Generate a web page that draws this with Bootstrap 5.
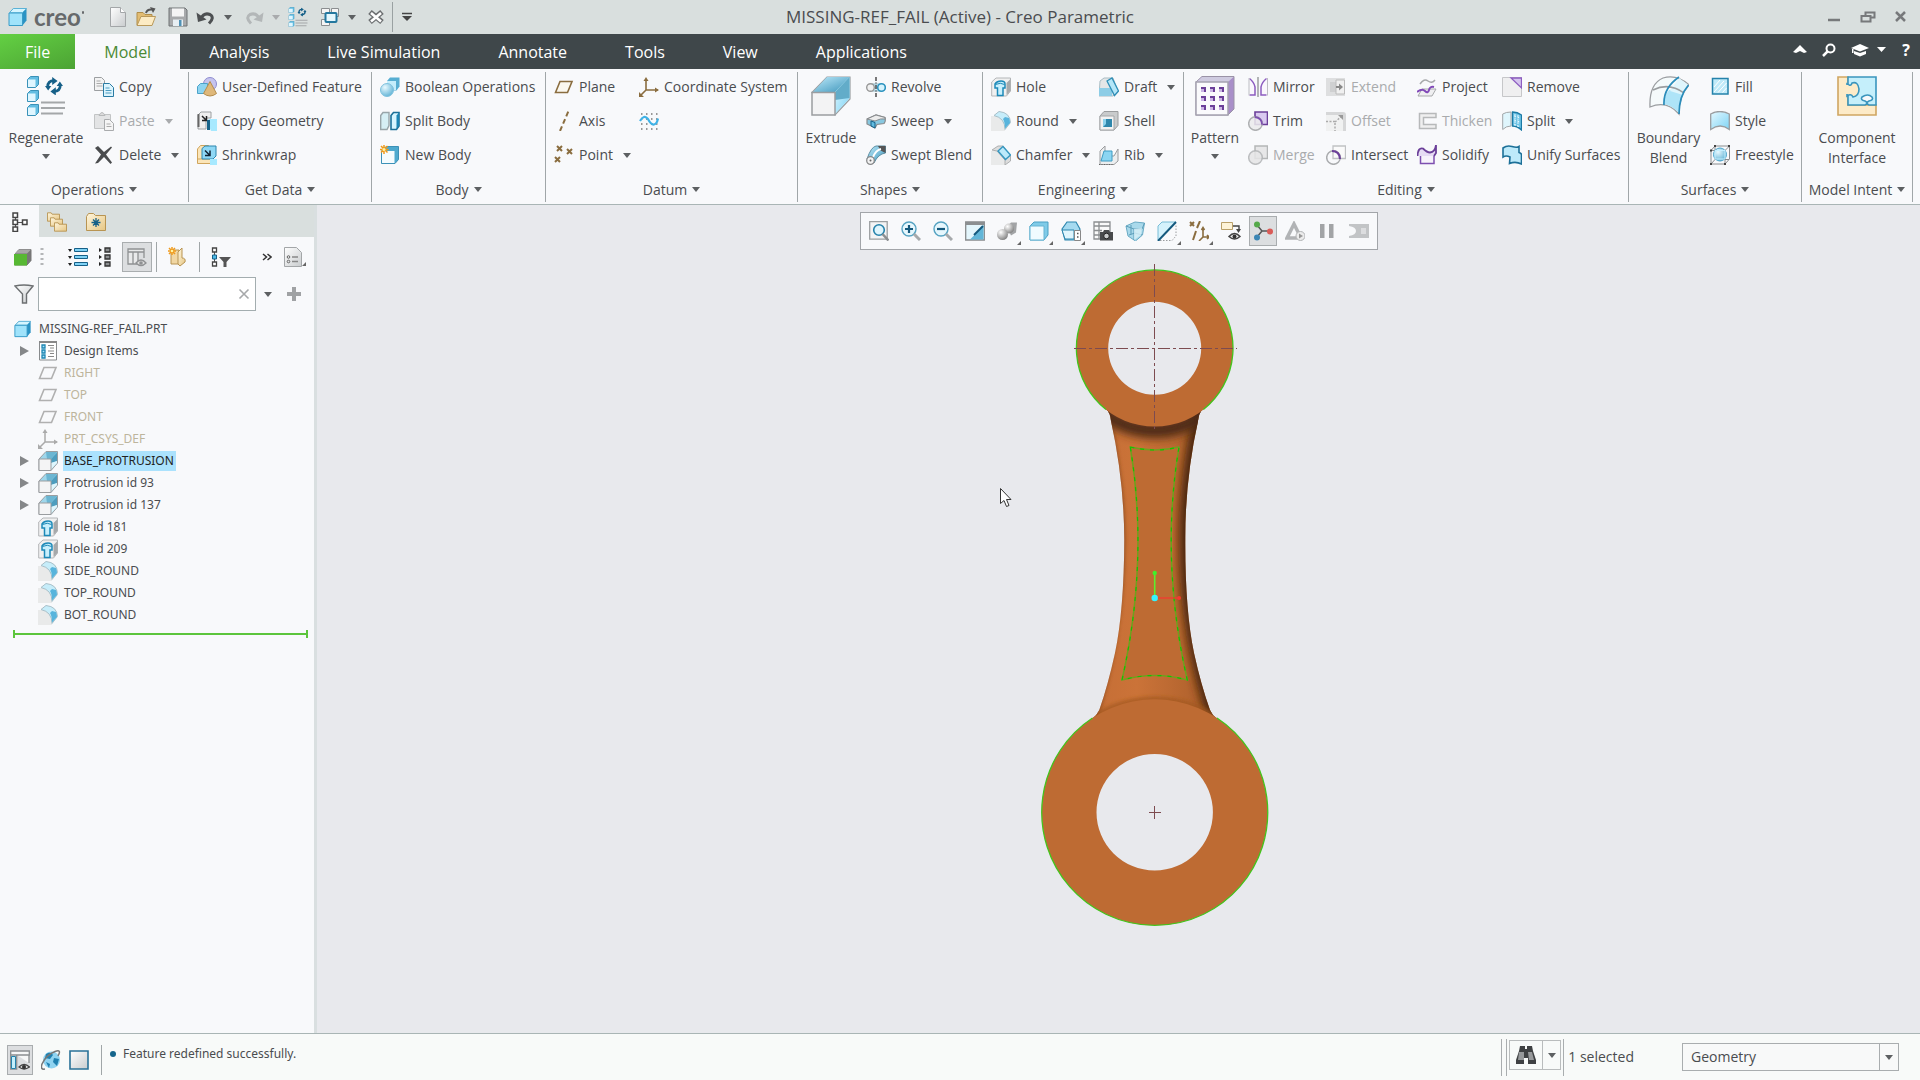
<!DOCTYPE html>
<html lang="en">
<head>
<meta charset="utf-8">
<meta name="viewport" content="width=device-width, initial-scale=1">
<title>MISSING-REF_FAIL (Active) - Creo Parametric</title>
<link href="https://cdn.jsdelivr.net/npm/bootstrap@5.3.0/dist/css/bootstrap.min.css" rel="stylesheet">
<style>
:root{--ink:#4a4c4f;--pale:#f8f9fb;--line:#a9b5b5;--dark:#3f474a}
body{font-family:"Open Sans","Noto Sans",sans-serif;font-size:14px;line-height:20px;color:var(--ink);background:#f8faf9}
.app{min-height:100vh}
button{font:inherit;color:inherit;background:none;border:0;padding:0}
svg{display:block;flex:none}
.i20{width:20px;height:20px}
.i38{width:40px;height:40px}
.tri{width:0;height:0;border:4px solid transparent;border-top:5px solid #5d6062;border-bottom:0;flex:none}
.off{color:#a9abad}
.off .tri{border-top-color:#a9abad}
/* title bar */
.titlebar{height:34px;background:#d9dfde}
.title-side{flex:1 1 0}
.brand{display:flex;width:50px;font-family:Lato,"Open Sans",sans-serif;font-weight:700;font-size:24px;line-height:24px;color:#66696b}
.brand::after{content:"";width:3px;height:3px;margin:6px 0 0 1px;border-radius:50%;background:#66696b}
.brand-icon{margin:0 6px 0 8px}
.qat{gap:8px}
.qat .split-btn{display:flex;align-items:center;gap:8px}
.qat-sep{width:1px;height:30px;background:#9aa1a2}
.win-title{font-size:17px;line-height:24px}
.win-btns{gap:18px}
.win-btns button:last-child{margin-right:12px}
/* ribbon tabs */
.tabbar{height:35px;background:var(--dark);color:#fff;font-size:16px}
.tabbar .nav-link{color:#fff;padding:1px 29px 0;line-height:34px;border-radius:0}
.tabbar .nav-link.file-tab{background:linear-gradient(160deg,#63d043,#4ca334);padding:1px 25px 0}
.tabbar .nav-link.active{background:var(--pale);color:#4a8a35}
.tab-tools{gap:15px;padding-right:10px}
/* ribbon */
.ribbon{background:var(--pale);border-bottom:1px solid var(--line)}
.group{border-right:1px solid #a0a6a8;margin:3px 0 2px}
.group-cols{display:grid;height:98px;align-content:start}
.group-label{height:32px;gap:5px;line-height:20px;padding-top:7px}
.stack{margin-top:-2px}
.cmd{display:flex;align-items:center;gap:5px;height:34px;white-space:nowrap;text-align:left}
.cmd .tri{margin-left:5px}
.big{display:flex;flex-direction:column;align-items:center;padding:4px 2px 0 0}
.big svg{margin-bottom:12px}
.big .tri{margin-top:6px}
.g-ops{width:189px}.g-ops .group-cols{grid-template-columns:94px 1fr}
.g-get{width:183px}.g-body{width:174px}
.g-get .group-cols,.g-body .group-cols{padding-left:8px}
.g-datum{width:252px}.g-datum .group-cols{padding-left:8px;grid-template-columns:85px 1fr}
.g-shapes{width:185px}.g-shapes .group-cols{grid-template-columns:68px 1fr}
.g-eng{width:201px}.g-eng .group-cols{padding-left:8px;grid-template-columns:108px 1fr}
.g-edit{width:445px}.g-edit .group-cols{grid-template-columns:64px 78px 91px 85px 1fr}
.g-surf{width:173px}.g-surf .group-cols{grid-template-columns:81px 1fr}
.g-model{width:111px}
/* model tree panel */
.side{width:317px;background:var(--pale);border-right:3px solid #d9dfe0}
.side-tabs{height:32px;background:#d9dfde}
.side-tabs button{width:39px;height:32px;display:grid;place-items:center;padding-top:1px}
.side-tabs .on{background:var(--pale)}
.tools{height:40px;padding-left:14px}
.gap-l{margin-left:11px}
.vsep{width:1px;height:30px;background:#a0a6a8}
.tgl{background:#dcdee0;border:1px solid #a9adaf}
.tgl-side{width:30px;height:30px;display:grid;place-items:center;margin-right:4px}
.find-row{padding-left:14px}
.find{height:34px;width:218px;border:1px solid #a3adaf;border-radius:0;background:#fff;padding:0 30px 0 6px}
.find-box{position:relative}
.find-clear{position:absolute;right:6px;top:11px}
.tree{font-family:"Noto Sans","Open Sans",sans-serif;font-size:12px;margin:0;padding:7px 0 0;list-style:none}
.tree li{display:flex;align-items:center;height:22px;padding-left:14px;white-space:nowrap}
.tree .exp{width:24px;height:22px;display:flex;align-items:center;padding-left:6px}
.exp::before{content:"";border:5px solid transparent;border-left:9px solid #858789;border-right:0}
.exp.leaf::before{visibility:hidden}
.tree .nm{margin-left:5px;padding:0 2px 0 1px;line-height:20px}
.tree .root-nm{margin-left:6px}
.tree .sel{background:#abe2fd;color:#222}
.tree .hid{color:#bdb59c}
.insert-line{height:8px;margin:4px 6px 0 13px;border:solid #5cc53c;border-width:0 2px}
.insert-line::before{content:"";display:block;height:2px;background:#5cc53c;position:relative;top:3px}
/* graphics window */
.stage{position:relative;background:#e8e9ed}
.scene{position:absolute;inset:0;width:100%;height:100%}
.gfx-bar{position:relative;margin-top:7px;background:var(--pale);border:1px solid #a2a5a9;padding:2px;height:38px}
.gfx-bar button{width:28px;height:30px;margin:1px 2px;display:grid;place-items:center;position:relative}
.more::after{content:"";position:absolute;right:0;bottom:1px;border:2px solid transparent;border-right-color:#666;border-bottom-color:#666}
/* status bar */
.status{height:47px;border-top:1px solid var(--line);background:#f8faf9}
.status-left{gap:8px;padding:6px 0 0 7px}
.status-btn{width:26px;height:30px;display:grid;place-items:center}
.msg{font-family:"Noto Sans","Open Sans",sans-serif;font-size:12px;padding-bottom:12px;gap:7px}
.dot{width:6px;height:6px;border-radius:50%;background:#15658c}
.tall{width:1px;height:37px;background:#a9adaf}
.finder{border:1px solid #b9bcbd;height:30px;margin:0 2px 4px}
.finder button{height:28px;display:grid;place-items:center}
.finder .l{width:33px;border-right:1px solid #b9bcbd}.finder .r{width:17px}
.pick{appearance:none;width:217px;height:28px;border:1px solid #a9adaf;border-radius:0;padding:0 8px;color:var(--ink);background:#f8f9f9;line-height:24px}
.pick-box{position:relative;margin-right:21px}
.pick-box::after{content:"";position:absolute;right:6px;top:12px;border:4px solid transparent;border-top:5px solid #5d6062;border-bottom:0;pointer-events:none}
.pick-box::before{content:"";position:absolute;right:19px;top:0;width:1px;height:28px;background:#a9adaf;pointer-events:none}
</style>
</head>
<body>
<svg width="0" height="0" class="position-absolute" aria-hidden="true">
<defs>
<linearGradient id="gB" x1="0" y1="0" x2="1" y2="1"><stop offset="0" stop-color="#e4f8ff"/><stop offset="1" stop-color="#7ed4f5"/></linearGradient>
<linearGradient id="gD" x1="0" y1="0" x2="1" y2="1"><stop offset="0" stop-color="#bfeafa"/><stop offset="1" stop-color="#3c95bb"/></linearGradient>
<linearGradient id="gG" x1="0" y1="0" x2="1" y2="1"><stop offset="0" stop-color="#fff"/><stop offset="1" stop-color="#c9ccce"/></linearGradient>
<linearGradient id="gY" x1="0" y1="0" x2="1" y2="1"><stop offset="0" stop-color="#fff6dd"/><stop offset="1" stop-color="#e6c684"/></linearGradient>
<radialGradient id="gS" cx=".35" cy=".3" r=".8"><stop offset="0" stop-color="#e8f9ff"/><stop offset="1" stop-color="#57aed2"/></radialGradient>
<radialGradient id="gK" cx=".35" cy=".3" r=".8"><stop offset="0" stop-color="#fff"/><stop offset="1" stop-color="#777"/></radialGradient>
<symbol id="part" viewBox="0 0 20 20"><path d="M1 6l4-4.500h13.500v12L14.500 18.500H1z" fill="#2b93c4"/><path d="M1 6h13.500v12.500H1z" fill="#a0e3fb" stroke="#3a9cc8"/><path d="M1.500 5.500L5.500 1.500h13l-4 4z" fill="#d5f5ff" stroke="#5cb2d6"/></symbol>
<symbol id="new" viewBox="0 0 20 20"><path d="M2.500.5h10l5 5v14h-15z" fill="url(#gG)" stroke="#a3a6a8"/><path d="M12.500.5v5h5" fill="#fff" stroke="#a3a6a8"/></symbol>
<symbol id="open" viewBox="0 0 20 20"><path d="M1 18V5.500h6l2 2h7V18z" fill="#e2bc72" stroke="#b08d4a"/><path d="M1 18.500L5 9.500h14.500L16 18.500z" fill="#fcebc4" stroke="#b9995a"/><path d="M10 6q1-4 6-3.500" fill="none" stroke="#555" stroke-width="2"/><path d="M14 0l5.500 1.500L17 6z" fill="#555"/></symbol>
<symbol id="save" viewBox="0 0 20 20"><path d="M1 1h16l2 2v16H1z" fill="#a7a9ab" stroke="#6f7274"/><path d="M4 1.500h12v8H4z" fill="#f4f4f4"/><path d="M5 12.500h10v6.500H5z" fill="#e7eef2"/><path d="M11 13h2.500v6H11z" fill="#4f91b5"/></symbol>
<symbol id="undo" viewBox="0 0 20 20"><path d="M4.500 12Q8 5 14 7.500q5 3-1 9" fill="none" stroke="#4d5052" stroke-width="3"/><path d="M.5 5.500L2 15l8.500-2.500z" fill="#4d5052"/></symbol>
<symbol id="redo" viewBox="0 0 20 20"><path d="M15.500 12Q12 5 6 7.500q-5 3 1 9" fill="none" stroke="#b3b7b8" stroke-width="3"/><path d="M19.500 5.500L18 15l-8.500-2.500z" fill="#b3b7b8"/></symbol>
<symbol id="arrows" viewBox="0 0 20 20"><path d="M3 11Q3 4 10 4" fill="none" stroke="#166088" stroke-width="3"/><path d="M8 0l6 4.500L8 9z" fill="#166088"/><path d="M17 9q0 7-7 7" fill="none" stroke="#166088" stroke-width="3"/><path d="M12 11.500L6 16l6 4.500zM0 10h7l-3.500 5zM13 10h7l-3.500-5z" fill="#166088"/></symbol>
<symbol id="cube" viewBox="0 0 12 12"><path d="M.5 3.500l3-3h8v8l-3 3h-8z" fill="#62bde2" stroke="#3a92b8"/><path d="M1 3.500h7.500V11H1z" fill="#dff6ff"/></symbol>
<symbol id="regen" viewBox="0 0 40 40"><use href="#cube" x="1" y="0" width="12" height="12"/><use href="#cube" x="1" y="14" width="12" height="12"/><use href="#cube" x="1" y="28" width="12" height="12"/><use href="#arrows" x="18" y="1" width="20" height="18"/><path d="M15 26.500h24M15 32h24M15 37.500h22" stroke="#a4a7a9" stroke-width="2"/></symbol>
<symbol id="wins" viewBox="0 0 20 20"><g fill="#f5f5f5" stroke="#8b8e90"><path d="M1.500 1.500h8v5h-8zM11.500 1.500h7v8h-7zM1.500 12.500h8v6h-8z"/></g><rect x="5.500" y="6" width="11" height="9" rx="1" fill="#e5f7fd" stroke="#24789f" stroke-width="2"/></symbol>
<symbol id="closew" viewBox="0 0 16 16"><path d="M2 3l12 10M14 3L2 13" stroke="#6b6e70" stroke-width="5.500"/><path d="M3 4l10 8.500M13 4L3 12.500" stroke="#fff" stroke-width="2.600"/></symbol>
<symbol id="copy" viewBox="0 0 20 20"><path d="M.5.500h7l3 3v10H.5z" fill="#f3f3f3" stroke="#9c9fa1"/><path d="M2.500 4h4M2.500 6.500h6M2.500 9h6" stroke="#aaa"/><path d="M9.500 6.500h6l4 4v9h-10z" fill="#dcf4fd" stroke="#2a7ba3"/><path d="M11.500 11h4M11.500 13.500h6M11.500 16h6" stroke="#4e9cc0"/></symbol>
<symbol id="paste" viewBox="0 0 20 20"><path d="M.5 3.500h16v14H.5z" fill="#e3e4e5" stroke="#c2c4c5"/><path d="M5 4.500q3-6 6 0z" fill="#ddd" stroke="#b6b8b9"/><path d="M10.500 8.500h5l4 4v7h-9z" fill="#f5f5f5" stroke="#a9abad"/><path d="M12.500 13h4M12.500 15.500h5" stroke="#aaa"/></symbol>
<symbol id="del" viewBox="0 0 20 20"><path d="M1 3l3-2 6 6 7-5.500 1 1L12 9.500l6 8-1.500 1.500L10 12l-6 6-3 .5L7 9.500z" fill="#4a4c4e"/></symbol>
<symbol id="udf" viewBox="0 0 20 20"><circle cx="13" cy="7" r="6.500" fill="#c6c4ee" stroke="#8d8bcf"/><path d="M.5 9.500l3-3h7v8l-2 2h-8z" fill="#8dd4f1" stroke="#4ca3c9"/><path d="M13 4.500l6.500 12q-6.500 5-13 0z" fill="#dfb87a" stroke="#b48c4c"/></symbol>
<symbol id="cgeo" viewBox="0 0 20 20"><path d="M1 4l3-3h10v6H9v11H1z" fill="#efefef" stroke="#9c9fa1"/><path d="M1.500 3v13" stroke="#666" stroke-width="2"/><path d="M5 5l4.500 4.500M9.500 5v4.500H5" stroke="#222" stroke-width="1.500" fill="none"/><path d="M10 10l2-2h8v12h-6" fill="#a7e9ff"/><path d="M10 9h3v10h-3z" fill="#176389"/></symbol>
<symbol id="shrink" viewBox="0 0 20 20"><path d="M.5 4l3-3.500h8v17h-11z" fill="#fbe5b8" stroke="#d0a55c"/><path d="M.5 14h15v4.500H.5z" fill="#fbe5b8" stroke="#d0a55c"/><path d="M5 3.500L8 1h11v10l-3 3H5z" fill="#8fd8f5" stroke="#2d86ae"/><path d="M8 5.500l5 5M13 5.500v5H8" stroke="#123" stroke-width="1.500" fill="none"/><path d="M13 14h7v6h-7z" fill="#a7e9ff"/></symbol>
<symbol id="bool" viewBox="0 0 20 20"><path d="M7 4l3-3.500h9.500v9l-3 4H7z" fill="#57aed2"/><path d="M7 4h9v9H7z" fill="#c4edfb"/><circle cx="7" cy="13" r="6.500" fill="url(#gS)" stroke="#7fc2de"/></symbol>
<symbol id="splitb" viewBox="0 0 20 20"><path d="M.7 4.500L3 1.500h6v13l-2 4H.7z" fill="#d6eff5" stroke="#98a5a9" stroke-width="1.400"/><path d="M11 4.500l2.500-3H19v13.500l-2.500 3.500H11z" fill="#d6f5ff" stroke="#1b7098" stroke-width="1.600"/><path d="M16.500 4.500v13L19 15V1.500z" fill="#1b86b5"/></symbol>
<symbol id="newb" viewBox="0 0 20 20"><path d="M1.500 6L6 1.500h12.500v13L15 18.500H1.500z" fill="#4ea9ce" stroke="#3c91b7"/><path d="M2 6h12.500v12H2z" fill="#f4fbfe"/><path d="M4 0v9M-.5 4.500h9M1 1l6.500 6.500M7.500 1L1 7.500" stroke="#ef9a1c" stroke-width="1.500"/><circle cx="4" cy="4.500" r="1.500" fill="#fff3a0"/></symbol>
<symbol id="plane" viewBox="0 0 20 20"><path d="M1.500 15.500L6 4.500h12l-4.500 11z" fill="#fbf8ef" stroke="#8a6d3f" stroke-width="1.600"/></symbol>
<symbol id="planeg" viewBox="0 0 20 20"><path d="M1.500 15.500L6 4.500h12l-4.500 11z" fill="none" stroke="#b0b0b0" stroke-width="1.600"/></symbol>
<symbol id="axis" viewBox="0 0 20 20"><path d="M6 20L14.500 0" stroke="#8a6d3f" stroke-width="2" stroke-dasharray="5 3"/></symbol>
<symbol id="pts" viewBox="0 0 20 20"><path d="M3 1l5 5M8 1L3 6M13 4l5 5M18 4l-5 5M1 12l5 5M6 12l-5 5" stroke="#8a6d3f" stroke-width="2"/></symbol>
<symbol id="csys" viewBox="0 0 20 20"><path d="M7 2v11h12M7 13l-6 6" fill="none" stroke="#8a6d3f" stroke-width="1.600"/><path d="M7 0l2.500 4h-5zM20 13l-4 2.500v-5zM0 20v-5l5 5z" fill="#8a6d3f"/></symbol>
<symbol id="csysg" viewBox="0 0 20 20"><path d="M7 2v11h12M7 13l-6 6" fill="none" stroke="#aaa" stroke-width="1.500"/><path d="M7 0l2.500 4h-5zM20 13l-4 2.500v-5zM0 20v-5l5 5z" fill="#aaa"/></symbol>
<symbol id="sketch" viewBox="0 0 20 20"><path d="M2 3h17M2 8h17M2 13h17M2 18h17" stroke="#777" stroke-width="1.500" stroke-dasharray="1.500 3.500"/><path d="M1 10Q5 3 9 8q3 6 6 5.500 3-.5 4-6" fill="none" stroke="#3fb2e6" stroke-width="2.200"/></symbol>
<symbol id="extr" viewBox="0 0 40 40"><path d="M1 16.500L16 1h23v22L24 39z" fill="#c8effc" stroke="#9a9da0" stroke-width="1.200"/><path d="M2 16L16 1h22.500L24 16z" fill="url(#gD)"/><path d="M24 16L38.500 1v21L24 38z" fill="url(#gB)"/><path d="M38.500 1v21L24 24V16z" fill="#62acc9"/><path d="M1 16.500h23V39H1z" fill="#f3f3f4" stroke="#9a9da0" stroke-width="1.500"/></symbol>
<symbol id="extrs" viewBox="0 0 20 20"><path d="M1 8l7-7.500h11.500V12L13 19.500H1z" fill="#9fd6ea" stroke="#9a9da0"/><path d="M8 1h11l-6 7H9z" fill="#6cb6d2"/><path d="M13 8l6-6.500V10l-6 2z" fill="#4d9dbe"/><path d="M13 12l6-2v2l-6 6.500z" fill="#dff6fd"/><path d="M1 8h12v11.500H1z" fill="#f4f4f5" stroke="#9a9da0"/></symbol>
<symbol id="revolve" viewBox="0 0 20 20"><rect x="1" y="7" width="18" height="7" rx="3.500" fill="#cdeefa" stroke="#8fb6c4"/><circle cx="4.500" cy="10.500" r="3.800" fill="#f1f1f1" stroke="#999" stroke-width="1.400"/><circle cx="15.500" cy="10.500" r="3.800" fill="#d6f3fd" stroke="#2c93bf" stroke-width="1.600"/><path d="M10 0v20" stroke="#333" stroke-width="1.300" stroke-dasharray="4 1.500 1 1.500"/></symbol>
<symbol id="sweep" viewBox="0 0 20 20"><path d="M1 8l9-4 9 2.500q1 4-1 6l-7 1L9 17l-8-4z" fill="#88c8e0" stroke="#888b8d" stroke-width="1.200"/><path d="M1 8l8 2q6-3 10-2V6.500L10 4z" fill="#ececec" stroke="#888b8d"/><path d="M5 10l4 1.500V17l-4-2z" fill="#62bce0" stroke="#166088"/></symbol>
<symbol id="sblend" viewBox="0 0 20 20"><path d="M1 14Q5 2 10 1h9.500v7Q12 9 8 18z" fill="url(#gD)" stroke="#5d8fa3"/><path d="M19.500 1v7l-5-2.500L12 1z" fill="#555"/><path d="M7 12q3-7 8-8" stroke="#fff" stroke-width="2" fill="none"/><circle cx="4.500" cy="15.500" r="3.800" fill="#f3f3f3" stroke="#88898a" stroke-width="1.300"/><circle cx="4.500" cy="15.500" r="1" fill="#666"/></symbol>
<symbol id="hole" viewBox="0 0 20 20"><path d="M.7 5L5 1h14.500v13L15.500 19H.7z" fill="#f0f0f0" stroke="#b4b6b8"/><path d="M15.500 6L19.500 2v12l-4 4z" fill="#a6a9ab"/><path d="M6.500 18.500V11H4V7q2-3 6-3t4 3v4h-2v7.500z" fill="#c8effc" stroke="#1c89b8" stroke-width="1.500"/><path d="M4.500 7.500q5-2.500 9 0" fill="none" stroke="#1c89b8"/></symbol>
<symbol id="round" viewBox="0 0 20 20"><path d="M0 5h6q8 3 8 15H0z" fill="#e9eaea"/><path d="M3 4.500L8 .5q11 1 11.500 11L14 18.500Q14 7 3 4.500z" fill="#c6edfa" stroke="#a8bfc8"/><path d="M14 6l4 1q1 2 1 5l-5 5.500Q14 11 12 8z" fill="#58b4dc"/></symbol>
<symbol id="chamfer" viewBox="0 0 20 20"><path d="M0 6h7l7 8v6H0z" fill="#e9eaea"/><path d="M1 5l6-4h5l7.500 10v5L14 20v-5L6 6z" fill="#ddd" stroke="#aeb0b1"/><path d="M7 6l5-4.500 7.500 8.500-5 4.500z" fill="#bceafb" stroke="#3697c0" stroke-width="1.400"/></symbol>
<symbol id="draft" viewBox="0 0 20 20"><path d="M1 4l4-3h9l5 14-5 4H0z" fill="#e4e6e7" stroke="#a9bcc3"/><path d="M0 11h13v8H0z" fill="#8dcde6"/><path d="M8 4l5-3 6.500 13-4 4.500z" fill="#b4e6f8" stroke="#2f8eb6" stroke-width="1.300"/></symbol>
<symbol id="shell" viewBox="0 0 20 20"><path d="M1 5l4-4.500h14v14L15 19H1z" fill="#c9cbcc" stroke="#9a9c9e"/><path d="M1 5h14v14H1z" fill="#f2f2f2" stroke="#a4a6a8"/><path d="M4 8h9v8H4z" fill="#2f87ac"/><path d="M4 16l3-3V8H4z" fill="#8cd1ec"/></symbol>
<symbol id="rib" viewBox="0 0 20 20"><path d="M1 6l5-5v10h9l4-7v12l-4 3.500H1z" fill="#eceeef" stroke="#9a9c9e"/><path d="M5 6h8v10H2z" fill="#8bd5f2" stroke="#3c9cc4"/><path d="M0 19.500h14" stroke="#666" stroke-dasharray="1 1.500"/></symbol>
<symbol id="pattern" viewBox="0 0 40 40"><path d="M1 6l6-5.500h32V33l-6 6H1z" fill="#a98fc9" stroke="#9a93a6"/><path d="M1.500 6L7 1h31.500L33 6z" fill="#cfcbe0"/><path d="M1 6h32v33H1z" fill="#fafafc" stroke="#a5a3b0" stroke-width="1.500"/><g fill="#6b3f99"><path d="M6 11h5v5H6zM15 11h5v5h-5zM24 11h5v5h-5zM6 20h5v5H6zM15 20h5v5h-5zM24 20h5v5h-5zM6 29h5v5H6zM15 29h5v5h-5zM24 29h5v5h-5z"/></g><g fill="#cbb6e4"><path d="M6 13h3v3H6zM15 13h3v3h-3zM24 13h3v3h-3zM6 22h3v3H6zM15 22h3v3h-3zM24 22h3v3h-3zM6 31h3v3H6zM15 31h3v3h-3zM24 31h3v3h-3z"/></g></symbol>
<symbol id="mirror" viewBox="0 0 20 20"><path d="M10 0v20" stroke="#9b9d9f" stroke-width="1.500"/><path d="M1.500 1.500Q6 5 7 10v8H1.500M18.500 1.500Q14 5 13 10v8h5.500" fill="#faf7fd" stroke="#8c5cc0" stroke-width="1.500"/><path d="M1 1v17.500M19.500 1v17.500" stroke="#bdbdc2"/></symbol>
<symbol id="trim" viewBox="0 0 20 20"><path d="M7 1h12.500v12.500H7z" fill="#d9c9f0" stroke="#6b3f99" stroke-width="1.600"/><circle cx="7.500" cy="12.500" r="6.800" fill="#ececed" opacity=".85" stroke="#a2a4a6" stroke-width="1.500"/><path d="M7 6q7 1 7 7.500" fill="none" stroke="#7d4fb0" stroke-width="1.800"/></symbol>
<symbol id="merge" viewBox="0 0 20 20"><path d="M7 1h12.500v12.500H7z" fill="#e7e7e8" stroke="#b4b6b7" stroke-width="1.500"/><circle cx="7.500" cy="12.500" r="6.800" fill="#e6e6e7" opacity=".85" stroke="#b2b4b6" stroke-width="1.500"/></symbol>
<symbol id="extend" viewBox="0 0 20 20"><path d="M0 1h19v18H0z" fill="#dedfe0"/><path d="M4 5h6v10H4z" fill="#cfd0d1"/><path d="M10 3h8.500v14H10z" fill="#f0f0f0" stroke="#bbb"/><path d="M10 10h5" stroke="#888" stroke-width="2"/><path d="M13 6.500l4 3.500-4 3.500z" fill="#888"/></symbol>
<symbol id="offset" viewBox="0 0 20 20"><path d="M0 1h17q3 0 3 3v16h-3V6q0-2-2-2H0z" fill="#d6d7d8"/><path d="M0 4h15q2 0 2 2v14H0z" fill="#f0f1f1"/><path d="M0 10.500h9V20M9 11l7-6" fill="none" stroke="#aaa" stroke-width="1.500" stroke-dasharray="2 1.500"/><path d="M12 4h5v5z" fill="#999"/></symbol>
<symbol id="intersect" viewBox="0 0 20 20"><path d="M7 1h12.500v12.500H7z" fill="#fafafa" stroke="#c0c2c4" stroke-width="1.300"/><circle cx="7.500" cy="12.500" r="6.800" fill="none" stroke="#aaacae" stroke-width="1.500"/><path d="M6 6q7.500 0 8 8" fill="none" stroke="#6b3f99" stroke-width="2.200"/></symbol>
<symbol id="project" viewBox="0 0 20 20"><path d="M3 7q4-6 8-3t7-1" fill="none" stroke="#a7a9ab" stroke-width="1.500"/><path d="M1 19l4-7h14l-4 7z" fill="#efeff1" stroke="#a7a9ab"/><path d="M0 15q5-4 8-1t4-1 5-3" fill="none" stroke="#8149b8" stroke-width="2"/></symbol>
<symbol id="thick" viewBox="0 0 20 20"><path d="M19 2.500H2.500v15H19v-4H6.500v-7H19z" fill="#efefef" stroke="#b7b9ba" stroke-width="1.500"/></symbol>
<symbol id="solid" viewBox="0 0 20 20"><path d="M3.500 6v12.500h13.500V8" fill="#f6f2fb" stroke="#7d4fb0" stroke-width="1.500"/><path d="M.5 11Q1 2 6 3.500q4 4 7 4Q18 7 19 0v8l-2 3" fill="#e6dcf4" stroke="#6b3f99" stroke-width="1.800"/></symbol>
<symbol id="remove" viewBox="0 0 20 20"><path d="M.5.500h19v19H.5z" fill="#efeff0" stroke="#c6c7c9"/><path d="M9 1h10.500v10z" fill="#d5c4ee" stroke="#8c5cc0" stroke-width="1.300"/></symbol>
<symbol id="split" viewBox="0 0 20 20"><path d="M.7 3Q4 1 9 1v14q-5 0-8.300 3.500z" fill="#dff6fd" stroke="#a2a7a9"/><path d="M10.500 1q5 0 9 3v15q-4-4-9-4z" fill="#6fc4e6" stroke="#1c7aa5" stroke-width="1.300"/><path d="M12 5l6 2M12 9l6 2M12 13l6 3M13 3v12M16 4v12" stroke="#e6f8ff" stroke-dasharray="2 1.500"/></symbol>
<symbol id="unify" viewBox="0 0 20 20"><path d="M1 3q4-3 9-1.500 5 1.500 7 0v6q3 1 2.500 3V19q-6-3-12-.5L8 12q-4-2-7 0z" fill="#bdeafa" stroke="#1c7098" stroke-width="1.600"/></symbol>
<symbol id="bblend" viewBox="0 0 40 40"><path d="M1 31Q0 8 14 2q14-4 26 7-10 10-10 29Q18 24 1 31z" fill="#f5fafb" stroke="#9a9da0" stroke-width="1.300"/><path d="M20 14q8-2 14 4-4 8-4 19-8-8-15-9 0-8 5-14z" fill="#aee4f8"/><path d="M30 2l9.500 7L34 19l-13-4z" fill="#dff5fc"/><path d="M4 14q16-8 31 3" fill="none" stroke="#9a9da0" stroke-width="1.500"/><path d="M30 1Q14 12 15 29M39.500 9Q30 20 30 38" fill="none" stroke="#2a8cba" stroke-width="1.700"/></symbol>
<symbol id="fill" viewBox="0 0 20 20"><path d="M2.500 1.500h15.500v15.500H2.500z" fill="#bfeaf9" stroke="#2582ab" stroke-width="1.500"/><path d="M4 10l6-7M4 15L14 4M8 15.500L16.500 6M12.500 15.500l4-4.500" stroke="#fff"/></symbol>
<symbol id="style" viewBox="0 0 20 20"><path d="M.7 3q9-5 18.600 0v15.500q-9-7-18.600 0z" fill="url(#gB)" stroke="#9a9da0" stroke-width="1.300"/></symbol>
<symbol id="free" viewBox="0 0 20 20"><path d="M1 5.500l4-4.500h14.500v13l-4.500 5H1zM1 5.500h14V19M15 5.500L19.500 1M5 1v13.500h14M5 14.500L1 19" fill="none" stroke="#8a8c8e"/><circle cx="10" cy="9.500" r="6.500" fill="url(#gS)" stroke="#4aa4cb"/><path d="M5 5.500h10V14H5z" fill="none" stroke="#c5f0ff"/><path d="M0 4.500h2v2H0zM0 18h2v2H0zM14 18h2v2h-2zM18 0h2v2h-2zM4 0h2v2H4z" fill="#444"/></symbol>
<symbol id="comp" viewBox="0 0 40 40"><path d="M1 1h10v28h28v10H1z" fill="#fdebc8" stroke="#cfa662" stroke-width="1.600"/><path d="M11 1h28v28H32q-4-2 0-4 5-1 3-4-4-4-10 0-2 3 3 4 4 2 0 4H11z" fill="#c5effb" stroke="#3a95bd" stroke-width="1.600"/><path d="M10 8q4 3 5-1 6-2 7 6 0 7-6 8-2-4-6-1z" fill="#fdebc8" stroke="#3a95bd" stroke-width="1.600"/><path d="M10 9v9" stroke="#fdebc8" stroke-width="3"/></symbol>
<symbol id="tree" viewBox="0 0 16 20"><path d="M3.500 5v11M4 10.500h7" stroke="#555"/><path d="M1 1h4.500v4.500H1zM1 8h4.500v4.500H1zM1 15h4.500v4.500H1zM10.500 8H15v4.500h-4.500z" fill="#fff" stroke="#444" stroke-width="1.500"/></symbol>
<symbol id="fold" viewBox="0 0 14 10"><path d="M.5 9.500v-9h4l1 1.500h8v7.500z" fill="url(#gY)" stroke="#b89452"/></symbol>
<symbol id="folds" viewBox="0 0 20 20"><use href="#fold" x="0" y="0" width="13" height="10"/><use href="#fold" x="3" y="5" width="13" height="10"/><use href="#fold" x="7" y="10" width="13" height="10"/></symbol>
<symbol id="fav" viewBox="0 0 20 20"><path d="M.5 18.500v-14l2-3h5l2 2h10v15z" fill="url(#gY)" stroke="#b89452"/><path d="M10 6v9M5.500 10.500h9M7 7.500l6 6M13 7.500l-6 6" stroke="#166088" stroke-width="1.300"/></symbol>
<symbol id="gcube" viewBox="0 0 18 18"><path d="M1 6l4-4.500h12v11L13 17H1z" fill="#777" stroke="#777"/><path d="M1 5.500l4-4h12l-4 4z" fill="#a7a7a7"/><path d="M0 6h13v11.500H0z" fill="#57b833"/></symbol>
<symbol id="exall" viewBox="0 0 20 20"><path d="M6.500 1.500h13v3h-13zM6.500 8.500h13v3h-13zM6.500 15.500h13v3h-13z" fill="#7fd2f5" stroke="#166088"/><path d="M0 2h4L2 5zM0 9h4l-2 3zM0 16h4l-2 3z" fill="#222"/></symbol>
<symbol id="colall" viewBox="0 0 12 20"><path d="M6 1h5v4H6zM6 8h5v4H6zM6 15h5v4H6z" fill="#8b8e90" stroke="#333" stroke-width="1.300"/><path d="M0 1l3 2-3 2zM0 8l3 2-3 2zM0 15l3 2-3 2z" fill="#222"/></symbol>
<symbol id="cols" viewBox="0 0 20 20"><path d="M1 2h16v3H1zM1 5v12h5V5M6 17h5V5H6M11 5v8M17 5v6" fill="#e9eaeb" stroke="#8f9193" stroke-width="1.300"/><path d="M9 16q5-6 10 0-5 5-10 0z" fill="#ddd" stroke="#8f9193" stroke-width="1.300"/><circle cx="14" cy="16" r="1.800" fill="#8f9193"/></symbol>
<symbol id="foldnew" viewBox="0 0 20 20"><path d="M3 3h8v14H3z" fill="#f1d7a3" stroke="#b89452"/><path d="M10 5l4-4v10q4 0 3 4l-5 4-2-2z" fill="url(#gY)" stroke="#b89452"/><path d="M4 0v8M0 4h8M1 1l6 6M7 1L1 7" stroke="#ef9a1c" stroke-width="1.500"/><circle cx="4" cy="4" r="1.300" fill="#fff3a0"/></symbol>
<symbol id="tfilt" viewBox="0 0 20 20"><path d="M3.500 5v11" stroke="#555"/><path d="M1.500 1h4v4h-4zM1.500 15h4v4h-4z" fill="#fff" stroke="#444" stroke-width="1.300"/><path d="M1.500 8h4v4h-4z" fill="#4db9e6" stroke="#166088"/><path d="M8 10h12l-4.500 5v5h-3v-5z" fill="#555"/></symbol>
<symbol id="doc" viewBox="0 0 18 20"><path d="M.5.500h12l5 5v14H.5z" fill="url(#gG)" stroke="#a3a6a8"/><circle cx="4.500" cy="10" r="1.300" fill="none" stroke="#666"/><circle cx="4.500" cy="14.500" r="1.300" fill="none" stroke="#666"/><path d="M8 10h6M8 14.500h6" stroke="#888" stroke-width="1.500"/></symbol>
<symbol id="funnel" viewBox="0 0 20 20"><path d="M1 2q9-2 18 0l-6.500 8v9h-4v-9z" fill="url(#gG)" stroke="#6c6f71" stroke-width="1.400"/></symbol>
<symbol id="ditems" viewBox="0 0 20 20"><path d="M1.500 1h17v18h-17z" fill="#fff" stroke="#888b8d"/><path d="M1 1h18" stroke="#888" stroke-width="2"/><g fill="#a9e3fa" stroke="#1d86b3" stroke-width="1.300"><path d="M4 4h3v3H4zM4 9h3v3H4zM4 14h3v3H4z"/></g><path d="M10 4.500h6M12 7h4M10 10h6M12 12.500h4M10 15.500h6" stroke="#888"/></symbol>
<symbol id="refit" viewBox="0 0 20 20"><path d="M.7.700h17.500v17.500H.7z" fill="#f4f4f5" stroke="#9c9fa1" stroke-width="1.300"/><circle cx="10" cy="9" r="5.300" fill="#dff5fd" stroke="#2582ab" stroke-width="1.600"/><path d="M13.500 13l6 6.500" stroke="#8c8f91" stroke-width="2.500"/></symbol>
<symbol id="zin" viewBox="0 0 20 20"><circle cx="8" cy="8" r="7" fill="#e6f7fd" stroke="#56a3c2" stroke-width="1.400"/><path d="M8 4v8M4 8h8" stroke="#15597d" stroke-width="2.200"/><path d="M13 13l6 6" stroke="#a6a9ab" stroke-width="3"/></symbol>
<symbol id="zout" viewBox="0 0 20 20"><circle cx="8" cy="8" r="7" fill="#e6f7fd" stroke="#56a3c2" stroke-width="1.400"/><path d="M4 8h8" stroke="#15597d" stroke-width="2.200"/><path d="M13 13l6 6" stroke="#a6a9ab" stroke-width="3"/></symbol>
<symbol id="repaint" viewBox="0 0 20 20"><path d="M.7 1h18.600v18H.7z" fill="#e4f6fc" stroke="#888b8d" stroke-width="1.300"/><path d="M18.500 4v14.500H5l5-5z" fill="#62b6d8"/><path d="M1 1h18v3H1z" fill="#8c8f91"/><path d="M9 14l9-9" stroke="#15597d" stroke-width="2"/></symbol>
<symbol id="shade" viewBox="0 0 20 20"><path d="M10 6l4-4.500h6l-1 10-5 3z" fill="#a2a4a6"/><circle cx="12" cy="7.500" r="5" fill="url(#gK)"/><circle cx="5.500" cy="13.500" r="5.500" fill="url(#gK)"/></symbol>
<symbol id="box" viewBox="0 0 20 20"><path d="M1 5l4-4h14v13l-4 5H1z" fill="#7fcbe8" stroke="#4aa0c4"/><path d="M1 5h14v14H1z" fill="#f0fbff" stroke="#66b4d3"/></symbol>
<symbol id="views" viewBox="0 0 20 20"><path d="M1 8l5-7h9l4 7-2 8-3 3H4z" fill="#a5daf0" stroke="#2d86ae" stroke-width="1.200"/><path d="M1 9h12v9H4z" fill="#dff5fd" stroke="#2d86ae"/><path d="M13.500 9.500h6v10h-6z" fill="#fff" stroke="#888"/><path d="M16 12.500h1.500M16 16h1.500" stroke="#555" stroke-width="1.500"/></symbol>
<symbol id="vman" viewBox="0 0 20 20"><path d="M1 1h16v17H1zM1 5h16M1 9.500h8M1 14h6M6 1v17" fill="#fafafa" stroke="#8c8f91" stroke-width="1.300"/><path d="M7 11h3l1-2h5l1 2h3v8.500H7z" fill="#484a4c"/><circle cx="13.500" cy="15" r="2.800" fill="#c9cbcc" stroke="#222"/></symbol>
<symbol id="persp" viewBox="0 0 20 20"><path d="M1 5l9-4 9.500 1-2 12-7 6L3 15z" fill="#a9d9eb" stroke="#69aac4"/><path d="M1 5l8 3h8l2.500-6M9 8v11M4 14l6-2 7 2M6 4v9" fill="none" stroke="#5b9db9"/><path d="M9 8l8-1-1 7-7 5z" fill="#d8f0f8" opacity=".8"/></symbol>
<symbol id="section" viewBox="0 0 20 20"><path d="M1 5l4-4h14L2 19H1z" fill="#d5f2fc" stroke="#78bcd6"/><path d="M3 19.500h12l4-4.500V3" fill="none" stroke="#9a9c9e" stroke-dasharray="1.500 1.500"/><path d="M1 20L19 1" stroke="#15597d" stroke-width="2"/></symbol>
<symbol id="datums" viewBox="0 0 20 20"><path d="M1 1l4 4M5 1L1 5M11 0L8 7M7 10l-3 9" stroke="#8a6d3f" stroke-width="2"/><path d="M14 7v9h6M14 16l-4 4M12.500 9L14 6.500l1.500 2.500M18 14l2 2-2 2" fill="none" stroke="#8a6d3f" stroke-width="1.600"/></symbol>
<symbol id="annot" viewBox="0 0 20 20"><path d="M.5 1.500h11v7H.5z" fill="#fdf3d8" stroke="#b9a06a"/><path d="M12 5h6v4" fill="none" stroke="#444" stroke-width="1.400"/><path d="M15 8h5l-2.500 4z" fill="#444"/><path d="M8 15.500q5.500-6 11 0-5.500 5-11 0z" fill="#eee" stroke="#444" stroke-width="1.500"/><circle cx="13.500" cy="15.500" r="2" fill="#333"/></symbol>
<symbol id="spin" viewBox="0 0 20 20"><path d="M4 4l5 6-5 6M9 10h7" fill="none" stroke="#555" stroke-width="1.500"/><circle cx="4" cy="3.500" r="3" fill="#55a94a"/><circle cx="4" cy="16.500" r="3" fill="#3b86b5"/><circle cx="17" cy="10.500" r="3" fill="#d95b57"/></symbol>
<symbol id="sim" viewBox="0 0 20 20"><path d="M9 3l7 14H2z" fill="none" stroke="#b1b3b5" stroke-width="3.500"/><circle cx="15.500" cy="15" r="4.500" fill="#ececec" stroke="#b1b3b5"/><path d="M14 12.500l4 2.500-4 2.500z" fill="#999"/></symbol>
<symbol id="pause" viewBox="0 0 20 20"><path d="M3 3h4.500v14H3zM12 3h4.500v14H12z" fill="#a2a4a6"/></symbol>
<symbol id="simres" viewBox="0 0 20 20"><path d="M0 3h20v14H0v-2q7-1 7-5T0 5z" fill="#c2c4c6"/><path d="M12 7h5v6h-5z" fill="#dcdddf"/></symbol>
<symbol id="panel" viewBox="0 0 20 20"><path d="M.7 1h18.600v4H.7zM.7 5v14h6V5M7 5h12v8" fill="#f7f7f7" stroke="#8c8f91" stroke-width="1.300"/><path d="M1.500 6.500h4v12h-4z" fill="#c5effb" stroke="#2582ab"/><path d="M9 17q5-5 10.500 0-5.500 4-10.500 0z" fill="#ddd" stroke="#444" stroke-width="1.300"/><circle cx="14" cy="17" r="2" fill="#333"/></symbol>
<symbol id="globe" viewBox="0 0 20 20"><circle cx="10.500" cy="10" r="8.500" fill="#8fd3f1"/><path d="M5 4q5-3 7 1l-3 4-5-1zM13 8l5 1-2 7-4-4zM5 12l4 2-1 4z" fill="#1f80b0"/><path d="M17 6q4-7-3-4.500Q5 5 1 14q-2 6 3 5" fill="none" stroke="#777" stroke-width="1.500"/></symbol>
<symbol id="sq" viewBox="0 0 20 20"><path d="M1 1h18v18H1z" fill="url(#gG)" stroke="#2a7298" stroke-width="1.600"/></symbol>
<symbol id="bino" viewBox="0 0 20 20"><path d="M4 1h5v3h2V1h5l1 5 3 9v4h-8v-6H8v6H0v-4l3-9z" fill="#3f4143"/><path d="M3 7h5v8H2zM12 7h4l2 8h-5z" fill="#97999b"/></symbol>
<linearGradient id="armH" gradientUnits="userSpaceOnUse" x1="1094" y1="0" x2="1216" y2="0"><stop offset="0" stop-color="#c56e36"/><stop offset=".35" stop-color="#cb7338"/><stop offset=".6" stop-color="#be6b33"/><stop offset="1" stop-color="#a85c29"/></linearGradient>
<clipPath id="armC"><path d="M1106 409Q1110 412 1111 421Q1124 480 1124.300 540Q1124 610 1115 653Q1108 685 1099.300 710Q1097 715 1092 719V735H1217V719Q1212 715 1210 710Q1201 685 1194 653Q1185 610 1185.300 540Q1185 480 1198 421Q1199 412 1203 409z"/></clipPath>
<filter id="b3" x="-50%" y="-50%" width="200%" height="200%"><feGaussianBlur stdDeviation="5"/></filter>
<filter id="b1" x="-50%" y="-50%" width="200%" height="200%"><feGaussianBlur stdDeviation="2"/></filter>
</defs>
</svg>

<div class="app d-flex flex-column">
<header class="titlebar d-flex align-items-center">
  <div class="title-side d-flex align-items-center">
    <svg class="i20 brand-icon" aria-hidden="true"><use href="#part"/></svg>
    <span class="brand">creo</span>
    <div class="qat d-flex align-items-center ms-4">
      <button aria-label="New"><svg class="i20"><use href="#new"/></svg></button>
      <button aria-label="Open"><svg class="i20"><use href="#open"/></svg></button>
      <button class="ms-1" aria-label="Save"><svg class="i20"><use href="#save"/></svg></button>
      <button class="split-btn" aria-label="Undo"><svg class="i20"><use href="#undo"/></svg><span class="tri"></span></button>
      <button class="split-btn off ms-1" aria-label="Redo"><svg class="i20"><use href="#redo"/></svg><span class="tri"></span></button>
      <button aria-label="Regenerate"><svg class="i20"><use href="#regen"/></svg></button>
      <button class="split-btn ms-1" aria-label="Windows"><svg class="i20"><use href="#wins"/></svg><span class="tri"></span></button>
      <button class="ms-1" aria-label="Close window"><svg width="16" height="16"><use href="#closew"/></svg></button>
      <span class="qat-sep"></span>
      <button aria-label="Customize toolbar"><svg width="12" height="10"><path d="M1 1.500h10" stroke="#444" stroke-width="1.500"/><path d="M1 4h10L6 9z" fill="#444"/></svg></button>
    </div>
  </div>
  <div class="win-title">MISSING-REF_FAIL (Active) - Creo Parametric</div>
  <div class="title-side win-btns d-flex align-items-center justify-content-end">
    <button aria-label="Minimize"><svg width="16" height="16"><path d="M2 11h12" stroke="#77797b" stroke-width="2.500"/></svg></button>
    <button aria-label="Restore"><svg width="16" height="16"><path d="M5.500 6V3.500h9v5H11M1.500 7h9v5.500h-9z" fill="none" stroke="#77797b" stroke-width="2"/></svg></button>
    <button aria-label="Close"><svg width="14" height="14"><path d="M2 2l9 9M11 2l-9 9" stroke="#77797b" stroke-width="2.500"/></svg></button>
  </div>
</header>

<nav class="tabbar d-flex justify-content-between" aria-label="Ribbon tabs">
  <div class="nav">
    <a class="nav-link file-tab" href="#">File</a>
    <a class="nav-link active" aria-current="page" href="#">Model</a>
    <a class="nav-link" href="#">Analysis</a>
    <a class="nav-link" href="#">Live Simulation</a>
    <a class="nav-link" href="#">Annotate</a>
    <a class="nav-link" href="#">Tools</a>
    <a class="nav-link" href="#">View</a>
    <a class="nav-link" href="#">Applications</a>
  </div>
  <div class="tab-tools d-flex align-items-center pb-1">
    <button aria-label="Minimize ribbon"><svg width="14" height="14"><path d="M0 9l7-7 7 7-3 1-4-2-4 2z" fill="#fff"/></svg></button>
    <button aria-label="Search commands"><svg width="14" height="14"><circle cx="8.500" cy="5.500" r="4" fill="none" stroke="#fff" stroke-width="2"/><path d="M5.500 8.500L1 13" stroke="#fff" stroke-width="2.500"/></svg></button>
    <button class="d-flex align-items-center gap-2" aria-label="Learning"><svg width="18" height="14"><path d="M0 5l9-4 9 4-9 3.500zM3 8l6 2 6-2v3l-6 2.500L3 11zM1 6h1.500v4H1z" fill="#fff"/></svg><svg width="10" height="6"><path d="M0 0h9L4.500 5z" fill="#fff"/></svg></button>
    <button class="fw-bold" aria-label="Help">?</button>
  </div>
</nav>

<section class="ribbon d-flex" aria-label="Ribbon">
  <div class="group g-ops">
    <div class="group-cols">
      <button class="big"><svg class="i38"><use href="#regen"/></svg>Regenerate<span class="tri"></span></button>
      <div class="stack">
        <button class="cmd"><svg class="i20"><use href="#copy"/></svg>Copy</button>
        <button class="cmd off"><svg class="i20"><use href="#paste"/></svg>Paste<span class="tri"></span></button>
        <button class="cmd"><svg class="i20"><use href="#del"/></svg>Delete<span class="tri"></span></button>
      </div>
    </div>
    <button class="group-label d-flex w-100 align-items-center justify-content-center">Operations<span class="tri"></span></button>
  </div>
  <div class="group g-get">
    <div class="group-cols">
      <div class="stack">
        <button class="cmd"><svg class="i20"><use href="#udf"/></svg>User-Defined Feature</button>
        <button class="cmd"><svg class="i20"><use href="#cgeo"/></svg>Copy Geometry</button>
        <button class="cmd"><svg class="i20"><use href="#shrink"/></svg>Shrinkwrap</button>
      </div>
    </div>
    <button class="group-label d-flex w-100 align-items-center justify-content-center">Get Data<span class="tri"></span></button>
  </div>
  <div class="group g-body">
    <div class="group-cols">
      <div class="stack">
        <button class="cmd"><svg class="i20"><use href="#bool"/></svg>Boolean Operations</button>
        <button class="cmd"><svg class="i20"><use href="#splitb"/></svg>Split Body</button>
        <button class="cmd"><svg class="i20"><use href="#newb"/></svg>New Body</button>
      </div>
    </div>
    <button class="group-label d-flex w-100 align-items-center justify-content-center">Body<span class="tri"></span></button>
  </div>
  <div class="group g-datum">
    <div class="group-cols">
      <div class="stack">
        <button class="cmd"><svg class="i20"><use href="#plane"/></svg>Plane</button>
        <button class="cmd"><svg class="i20"><use href="#axis"/></svg>Axis</button>
        <button class="cmd"><svg class="i20"><use href="#pts"/></svg>Point<span class="tri"></span></button>
      </div>
      <div class="stack">
        <button class="cmd"><svg class="i20"><use href="#csys"/></svg>Coordinate System</button>
        <button class="cmd" aria-label="Sketch"><svg class="i20"><use href="#sketch"/></svg></button>
      </div>
    </div>
    <button class="group-label d-flex w-100 align-items-center justify-content-center">Datum<span class="tri"></span></button>
  </div>
  <div class="group g-shapes">
    <div class="group-cols">
      <button class="big"><svg class="i38"><use href="#extr"/></svg>Extrude</button>
      <div class="stack">
        <button class="cmd"><svg class="i20"><use href="#revolve"/></svg>Revolve</button>
        <button class="cmd"><svg class="i20"><use href="#sweep"/></svg>Sweep<span class="tri"></span></button>
        <button class="cmd"><svg class="i20"><use href="#sblend"/></svg>Swept Blend</button>
      </div>
    </div>
    <button class="group-label d-flex w-100 align-items-center justify-content-center">Shapes<span class="tri"></span></button>
  </div>
  <div class="group g-eng">
    <div class="group-cols">
      <div class="stack">
        <button class="cmd"><svg class="i20"><use href="#hole"/></svg>Hole</button>
        <button class="cmd"><svg class="i20"><use href="#round"/></svg>Round<span class="tri"></span></button>
        <button class="cmd"><svg class="i20"><use href="#chamfer"/></svg>Chamfer<span class="tri"></span></button>
      </div>
      <div class="stack">
        <button class="cmd"><svg class="i20"><use href="#draft"/></svg>Draft<span class="tri"></span></button>
        <button class="cmd"><svg class="i20"><use href="#shell"/></svg>Shell</button>
        <button class="cmd"><svg class="i20"><use href="#rib"/></svg>Rib<span class="tri"></span></button>
      </div>
    </div>
    <button class="group-label d-flex w-100 align-items-center justify-content-center">Engineering<span class="tri"></span></button>
  </div>
  <div class="group g-edit">
    <div class="group-cols">
      <button class="big"><svg class="i38"><use href="#pattern"/></svg>Pattern<span class="tri"></span></button>
      <div class="stack">
        <button class="cmd"><svg class="i20"><use href="#mirror"/></svg>Mirror</button>
        <button class="cmd"><svg class="i20"><use href="#trim"/></svg>Trim</button>
        <button class="cmd off"><svg class="i20"><use href="#merge"/></svg>Merge</button>
      </div>
      <div class="stack">
        <button class="cmd off"><svg class="i20"><use href="#extend"/></svg>Extend</button>
        <button class="cmd off"><svg class="i20"><use href="#offset"/></svg>Offset</button>
        <button class="cmd"><svg class="i20"><use href="#intersect"/></svg>Intersect</button>
      </div>
      <div class="stack">
        <button class="cmd"><svg class="i20"><use href="#project"/></svg>Project</button>
        <button class="cmd off"><svg class="i20"><use href="#thick"/></svg>Thicken</button>
        <button class="cmd"><svg class="i20"><use href="#solid"/></svg>Solidify</button>
      </div>
      <div class="stack">
        <button class="cmd"><svg class="i20"><use href="#remove"/></svg>Remove</button>
        <button class="cmd"><svg class="i20"><use href="#split"/></svg>Split<span class="tri"></span></button>
        <button class="cmd"><svg class="i20"><use href="#unify"/></svg>Unify Surfaces</button>
      </div>
    </div>
    <button class="group-label d-flex w-100 align-items-center justify-content-center">Editing<span class="tri"></span></button>
  </div>
  <div class="group g-surf">
    <div class="group-cols">
      <button class="big"><svg class="i38"><use href="#bblend"/></svg>Boundary<br>Blend</button>
      <div class="stack">
        <button class="cmd"><svg class="i20"><use href="#fill"/></svg>Fill</button>
        <button class="cmd"><svg class="i20"><use href="#style"/></svg>Style</button>
        <button class="cmd"><svg class="i20"><use href="#free"/></svg>Freestyle</button>
      </div>
    </div>
    <button class="group-label d-flex w-100 align-items-center justify-content-center">Surfaces<span class="tri"></span></button>
  </div>
  <div class="group g-model">
    <div class="group-cols">
      <button class="big pe-0"><svg class="i38"><use href="#comp"/></svg>Component<br>Interface</button>
    </div>
    <button class="group-label d-flex w-100 align-items-center justify-content-center text-nowrap">Model Intent<span class="tri"></span></button>
  </div>
</section>

<main class="d-flex flex-fill">
  <aside class="side flex-shrink-0">
    <div class="side-tabs d-flex">
      <button class="on" aria-label="Model Tree"><svg width="16" height="20"><use href="#tree"/></svg></button>
      <button class="pe-1" aria-label="Folder Browser"><svg class="i20"><use href="#folds"/></svg></button>
      <button class="pe-1" aria-label="Favorites"><svg class="i20"><use href="#fav"/></svg></button>
    </div>
    <div class="tools d-flex align-items-center">
      <button aria-label="Part"><svg width="18" height="18"><use href="#gcube"/></svg></button>
      <svg class="ms-2" width="4" height="20" aria-hidden="true"><path d="M2 1v19" stroke="#b4b6b8" stroke-width="3" stroke-dasharray="2 3"/></svg>
      <button class="ms-4" aria-label="Expand all"><svg class="i20"><use href="#exall"/></svg></button>
      <button class="gap-l" aria-label="Collapse all"><svg width="12" height="20"><use href="#colall"/></svg></button>
      <button class="tgl tgl-side gap-l" aria-label="Tree columns" aria-pressed="true"><svg class="i20"><use href="#cols"/></svg></button>
      <span class="vsep"></span>
      <button class="gap-l" aria-label="New group"><svg class="i20"><use href="#foldnew"/></svg></button>
      <span class="vsep gap-l"></span>
      <button class="gap-l" aria-label="Tree filters"><svg class="i20"><use href="#tfilt"/></svg></button>
      <button class="ms-auto me-2 pe-1" aria-label="More"><svg width="10" height="10"><path d="M1 2l3.500 3L1 8M5.500 2L9 5 5.500 8" fill="none" stroke="#333" stroke-width="1.500"/></svg></button>
      <button class="more position-relative pe-1 me-2" aria-label="Settings"><svg width="18" height="20"><use href="#doc"/></svg></button>
    </div>
    <div class="find-row d-flex align-items-center">
      <svg class="i20 me-1" aria-hidden="true"><use href="#funnel"/></svg>
      <div class="find-box">
        <input class="find" type="text" aria-label="Search the model tree">
        <button class="find-clear" aria-label="Clear"><svg width="12" height="12"><path d="M1.500 1.500l9 9M10.500 1.500l-9 9" stroke="#a6a8aa" stroke-width="1.600"/></svg></button>
      </div>
      <button class="ms-2" aria-label="Search options"><span class="tri d-block"></span></button>
      <button class="gap-l ps-1" aria-label="Add"><svg width="14" height="14"><path d="M7 0v14M0 7h14" stroke="#a0a2a4" stroke-width="4"/></svg></button>
    </div>
    <ul class="tree">
      <li><svg width="18" height="18"><use href="#part"/></svg><span class="nm root-nm">MISSING-REF_FAIL.PRT</span></li>
      <li><button class="exp" aria-label="Expand"></button><svg class="i20"><use href="#ditems"/></svg><span class="nm">Design Items</span></li>
      <li><span class="exp leaf"></span><svg class="i20"><use href="#planeg"/></svg><span class="nm hid">RIGHT</span></li>
      <li><span class="exp leaf"></span><svg class="i20"><use href="#planeg"/></svg><span class="nm hid">TOP</span></li>
      <li><span class="exp leaf"></span><svg class="i20"><use href="#planeg"/></svg><span class="nm hid">FRONT</span></li>
      <li><span class="exp leaf"></span><svg class="i20"><use href="#csysg"/></svg><span class="nm hid">PRT_CSYS_DEF</span></li>
      <li><button class="exp" aria-label="Expand"></button><svg class="i20"><use href="#extrs"/></svg><span class="nm sel">BASE_PROTRUSION</span></li>
      <li><button class="exp" aria-label="Expand"></button><svg class="i20"><use href="#extrs"/></svg><span class="nm">Protrusion id 93</span></li>
      <li><button class="exp" aria-label="Expand"></button><svg class="i20"><use href="#extrs"/></svg><span class="nm">Protrusion id 137</span></li>
      <li><span class="exp leaf"></span><svg class="i20"><use href="#hole"/></svg><span class="nm">Hole id 181</span></li>
      <li><span class="exp leaf"></span><svg class="i20"><use href="#hole"/></svg><span class="nm">Hole id 209</span></li>
      <li><span class="exp leaf"></span><svg class="i20"><use href="#round"/></svg><span class="nm">SIDE_ROUND</span></li>
      <li><span class="exp leaf"></span><svg class="i20"><use href="#round"/></svg><span class="nm">TOP_ROUND</span></li>
      <li><span class="exp leaf"></span><svg class="i20"><use href="#round"/></svg><span class="nm">BOT_ROUND</span></li>
    </ul>
    <div class="insert-line"></div>
  </aside>

  <section class="stage flex-fill d-flex justify-content-center align-items-start" aria-label="Graphics window">
    <svg class="scene" viewBox="317 205 1603 828" role="img" aria-label="Connecting rod model">
      <g clip-path="url(#armC)">
        <path d="M1080 400h150v340h-150z" fill="url(#armH)"/>
        <path d="M1206 400Q1188 480 1189 540Q1189 640 1220 725" fill="none" stroke="#4a2810" stroke-width="20" filter="url(#b3)"/>
        <path d="M1104 400Q1122 480 1122 540Q1121 640 1092 725" fill="none" stroke="#7a401a" stroke-width="5" filter="url(#b1)"/>
        <circle cx="1154.700" cy="348.300" r="82" fill="none" stroke="#4e2b12" stroke-width="16" filter="url(#b3)"/>
        <circle cx="1154.700" cy="812.300" r="113" fill="none" stroke="#a0571f" stroke-width="4" filter="url(#b1)"/>
      </g>
      <path d="M1130.300 447Q1154.700 453 1179 447Q1160 560 1187.300 680Q1154.700 671 1122 680Q1149 560 1130.300 447z" fill="#be6b33" stroke="#6fa01e" stroke-width="1.500"/>
      <path d="M1130.300 447Q1154.700 453 1179 447Q1160 560 1187.300 680Q1154.700 671 1122 680Q1149 560 1130.300 447z" fill="none" stroke="#12c400" stroke-width="1.200" stroke-dasharray="4 6"/>
      <path fill="#be6b33" fill-rule="evenodd" d="M1076.400 348.300a78.300 78.300 0 1 0 156.600 0a78.300 78.300 0 1 0 -156.600 0zM1108.200 348.300a46.500 46.500 0 1 0 93 0a46.500 46.500 0 1 0 -93 0z"/>
      <path fill="#be6b33" fill-rule="evenodd" d="M1041.700 812.300a113 113 0 1 0 226 0a113 113 0 1 0 -226 0zM1096.500 812.300a58.200 58.200 0 1 0 116.400 0a58.200 58.200 0 1 0 -116.400 0z"/>
      <path d="M1106 409.500A78.300 78.300 0 1 1 1203.400 409.500M1092.500 718A113 113 0 1 0 1217 718" fill="none" stroke="#43c41c" stroke-width="1.300"/>
      <path d="M1074 348.500h163M1154.500 264v168" stroke="#7d4b50" stroke-width="1" stroke-dasharray="12 3 3 3"/>
      <path d="M1149 812.500h12M1154.500 806v13" stroke="#7d4b50"/>
      <path d="M1155 598h24" stroke="#f33a30" stroke-width="1.300"/><circle cx="1179" cy="598" r="2" fill="#f33a30"/>
      <path d="M1154.700 598v-25" stroke="#5cf02c" stroke-width="1.600"/><circle cx="1154.700" cy="573" r="2.200" fill="#3ff02c"/>
      <circle cx="1154.700" cy="598" r="3.200" fill="#33f3ff"/>
      <path d="M1000.500 488.500v15l3.500-3 2.500 6 2.500-1-2.500-6h4.500z" fill="#fff" stroke="#333"/>
    </svg>
    <div class="gfx-bar d-flex" role="toolbar" aria-label="In-graphics toolbar">
      <button aria-label="Refit"><svg class="i20"><use href="#refit"/></svg></button>
      <button aria-label="Zoom in"><svg class="i20"><use href="#zin"/></svg></button>
      <button aria-label="Zoom out"><svg class="i20"><use href="#zout"/></svg></button>
      <button aria-label="Repaint"><svg class="i20"><use href="#repaint"/></svg></button>
      <button class="more" aria-label="Rendering options"><svg class="i20"><use href="#shade"/></svg></button>
      <button class="more" aria-label="Display style"><svg class="i20"><use href="#box"/></svg></button>
      <button class="more" aria-label="Saved orientations"><svg class="i20"><use href="#views"/></svg></button>
      <button aria-label="View manager"><svg class="i20"><use href="#vman"/></svg></button>
      <button aria-label="Perspective view"><svg class="i20"><use href="#persp"/></svg></button>
      <button class="more" aria-label="Section"><svg class="i20"><use href="#section"/></svg></button>
      <button class="more" aria-label="Datum display filters"><svg class="i20"><use href="#datums"/></svg></button>
      <button aria-label="Annotation display"><svg class="i20"><use href="#annot"/></svg></button>
      <button class="tgl" aria-pressed="true" aria-label="Spin center"><svg class="i20"><use href="#spin"/></svg></button>
      <button aria-label="Simulate"><svg class="i20"><use href="#sim"/></svg></button>
      <button aria-label="Pause simulation"><svg class="i20"><use href="#pause"/></svg></button>
      <button aria-label="Simulation results"><svg class="i20"><use href="#simres"/></svg></button>
    </div>
  </section>
</main>

<footer class="status d-flex align-items-center justify-content-between">
  <div class="status-left d-flex align-items-center">
    <button class="tgl status-btn" aria-pressed="true" aria-label="Navigator"><svg class="i20"><use href="#panel"/></svg></button>
    <button aria-label="Browser"><svg class="i20"><use href="#globe"/></svg></button>
    <button aria-label="Full screen"><svg class="i20"><use href="#sq"/></svg></button>
    <span class="vsep ms-1"></span>
    <div class="msg d-flex align-items-center"><span class="dot"></span><span>Feature redefined successfully.</span></div>
  </div>
  <div class="d-flex align-items-center">
    <span class="tall me-1"></span><span class="tall"></span>
    <div class="finder d-flex"><button class="l" aria-label="Find"><svg class="i20"><use href="#bino"/></svg></button><button class="r" aria-label="Find options"><span class="tri"></span></button></div>
    <span class="tall me-1"></span>
    <span class="me-5">1 selected</span>
    <div class="pick-box"><select class="pick" aria-label="Selection filter"><option>Geometry</option><option>Features</option></select></div>
  </div>
</footer>
</div>
<script src="https://cdn.jsdelivr.net/npm/bootstrap@5.3.0/dist/js/bootstrap.bundle.min.js"></script>
</body>
</html>
